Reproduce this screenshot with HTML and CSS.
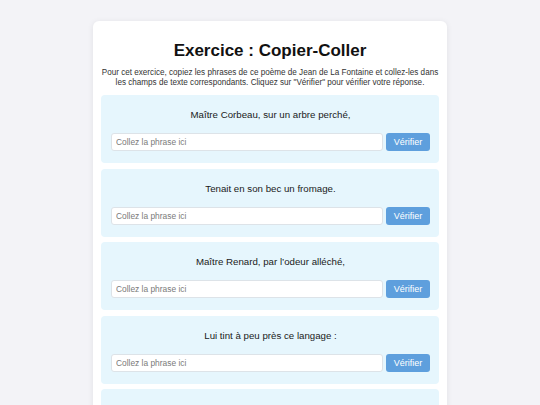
FILE: index.html
```html
<!DOCTYPE html>
<html lang="fr">
<head>
<meta charset="utf-8">
<title>Exercice : Copier-Coller</title>
<link rel="stylesheet" href="styles.css">
</head>
<body>
<div class="container">
  <h1 class="title">Exercice : Copier-Coller</h1>
  <p class="intro">Pour cet exercice, copiez les phrases de ce poème de Jean de La Fontaine et collez-les dans les champs de texte correspondants. Cliquez sur "Vérifier" pour vérifier votre réponse.</p>
  <div class="card">
    <p class="phrase">Maître Corbeau, sur un arbre perché,</p>
    <div class="row"><input class="field" type="text" placeholder="Collez la phrase ici"><button class="btn">Vérifier</button></div>
  </div>
  <div class="card">
    <p class="phrase">Tenait en son bec un fromage.</p>
    <div class="row"><input class="field" type="text" placeholder="Collez la phrase ici"><button class="btn">Vérifier</button></div>
  </div>
  <div class="card">
    <p class="phrase">Maître Renard, par l’odeur alléché,</p>
    <div class="row"><input class="field" type="text" placeholder="Collez la phrase ici"><button class="btn">Vérifier</button></div>
  </div>
  <div class="card">
    <p class="phrase">Lui tint à peu près ce langage :</p>
    <div class="row"><input class="field" type="text" placeholder="Collez la phrase ici"><button class="btn">Vérifier</button></div>
  </div>
  <div class="card">
    <p class="phrase">Et bonjour, Monsieur du Corbeau.</p>
    <div class="row"><input class="field" type="text" placeholder="Collez la phrase ici"><button class="btn">Vérifier</button></div>
  </div>
</div>
</body>
</html>
```
FILE: styles.css
```css
html, body {
  margin: 0;
  padding: 0;
}
body {
  background: #f3f3f7;
  font-family: "Liberation Sans", Arial, sans-serif;
  color: #222;
  overflow: hidden;
}
.container {
  width: 338px;
  margin: 21px auto 0;
  background: #ffffff;
  border-radius: 6px;
  padding: 8px 8px 8px;
  box-shadow: 0 1px 6px rgba(0, 0, 0, 0.08);
}
.title {
  margin: 10px 0 0;
  font-size: 17px;
  line-height: 24px;
  font-weight: bold;
  text-align: center;
  color: #111;
}
.intro {
  margin: 5px 0 7px;
  font-size: 8.15px;
  line-height: 10px;
  text-align: center;
  color: #333;
}
.card {
  background: #e6f6fd;
  border-radius: 4px;
  padding: 10px 9px 12px 10px;
  margin-bottom: 5.5px;
}
.phrase {
  margin: 3px 0 11px;
  font-size: 9.7px;
  line-height: 14px;
  text-align: center;
  color: #1a1a1a;
}
.row {
  display: flex;
  gap: 3px;
}
.field {
  flex: 1;
  min-width: 0;
  height: 18px;
  box-sizing: border-box;
  border: 1px solid #dde3e8;
  border-radius: 3px;
  background: #fff;
  padding: 0 4px;
  font-family: "Liberation Sans", Arial, sans-serif;
  font-size: 8.4px;
  color: #333;
  outline: none;
}
.field::placeholder {
  color: #7a7a7a;
}
.btn {
  width: 44px;
  height: 18px;
  border: none;
  border-radius: 3px;
  background: #5e9fdd;
  color: #fff;
  font-family: "Liberation Sans", Arial, sans-serif;
  font-size: 9px;
  padding: 0;
}
```
